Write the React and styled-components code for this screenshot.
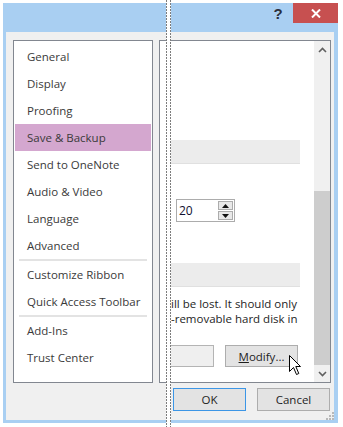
import React from 'react';
import styled, { createGlobalStyle } from 'styled-components';

const GlobalStyle = createGlobalStyle`
  html, body {
    margin: 0;
    padding: 0;
    background: #ffffff;
  }
  body {
    font-family: "Open Sans", "Noto Sans", Arial, sans-serif;
  }
`;

const Page = styled.div`
  position: relative;
  width: 343px;
  height: 427px;
  overflow: hidden;
  padding: 3px 5px 4px 3px;
  box-sizing: border-box;
`;

const Window = styled.div`
  width: 335px;
  height: 420px;
  background: #a9cff2;
  display: flex;
  flex-direction: column;
`;

const TitleBar = styled.div`
  height: 29px;
  display: flex;
  justify-content: flex-end;
  align-items: flex-start;
  flex-shrink: 0;
`;

const HelpButton = styled.div`
  width: 30px;
  height: 20px;
  display: flex;
  align-items: center;
  justify-content: center;
  font-family: "Liberation Sans", Arial, sans-serif;
  font-weight: bold;
  font-size: 15px;
  color: #2b2f3d;
`;

const CloseButton = styled.div`
  width: 45px;
  height: 20px;
  background: #c75050;
  display: flex;
  align-items: center;
  justify-content: center;
`;

const Body = styled.div`
  flex: 1;
  margin: 0 4px 3px 3px;
  background: #f0f0f0;
  padding: 8px 3px 0 7px;
  display: flex;
  flex-direction: column;
`;

const Panes = styled.div`
  display: flex;
  gap: 6px;
  height: 343px;
`;

const NavList = styled.div`
  width: 140px;
  box-sizing: border-box;
  border: 1px solid #828790;
  background: #fff;
  padding: 1.5px 1px 0 1px;
`;

const NavItem = styled.div`
  height: 27px;
  line-height: 27px;
  padding-left: 12px;
  font-size: 11.5px;
  color: #3a3a3a;
  background: ${p => (p.selected ? '#d4a7cf' : 'transparent')};
  white-space: nowrap;
`;

const NavSeparator = styled.div`
  height: 2px;
  margin: 0 4px;
  background: #e3e3e3;
`;

const ContentPanel = styled.div`
  width: 172px;
  box-sizing: border-box;
  border: 1px solid #828790;
  background: #fff;
  display: flex;
`;

const ContentArea = styled.div`
  flex: 1;
  padding: 99px 14px 0 7px;
  display: flex;
  flex-direction: column;
  font-size: 11.5px;
  color: #1e1e1e;
`;

const SectionHeader = styled.div`
  height: 23px;
  background: #ececec;
  border-bottom: 1px solid #e0e0e0;
  margin-top: ${p => p.top || 0}px;
`;

const SpinBox = styled.div`
  margin: 35px 0 0 9px;
  width: 59px;
  height: 23px;
  box-sizing: border-box;
  border: 1px solid #acacac;
  display: flex;
  align-items: stretch;
  padding: 1px;
`;

const SpinValue = styled.div`
  flex: 1;
  padding-left: 1px;
  line-height: 19px;
  font-size: 12px;
  color: #101030;
`;

const SpinButtons = styled.div`
  width: 15px;
  display: flex;
  flex-direction: column;
  gap: 1px;
`;

const SpinButton = styled.div`
  flex: 1;
  border: 1px solid #acacac;
  background: #e8e8e8;
  display: flex;
  align-items: center;
  justify-content: center;
`;

const Paragraph = styled.div`
  margin-top: 9px;
  padding-left: 4px;
  line-height: 15px;
  white-space: nowrap;
  overflow: hidden;
`;

const FieldRow = styled.div`
  margin-top: 19px;
  display: flex;
  gap: 11px;
  height: 22px;
`;

const TextField = styled.div`
  width: 47px;
  box-sizing: border-box;
  border: 1px solid #b4b4b4;
  background: #efefef;
`;

const PushButton = styled.div`
  position: relative;
  width: ${p => p.width || 73}px;
  box-sizing: border-box;
  border: 1px solid ${p => (p.primary ? '#3c96e6' : '#adadad')};
  background: #e3e3e3;
  display: flex;
  align-items: center;
  justify-content: center;
  font-size: 11.5px;
  color: #1e1e1e;
`;

const Underline = styled.span`
  text-decoration: underline;
`;

const Cursor = styled.svg`
  position: absolute;
  left: 63px;
  top: 9px;
`;

const Scrollbar = styled.div`
  width: 16px;
  background: #f0f0f0;
  display: flex;
  flex-direction: column;
  align-items: stretch;
`;

const ScrollArrow = styled.div`
  height: 17px;
  display: flex;
  align-items: center;
  justify-content: center;
`;

const ScrollTrack = styled.div`
  flex: 1;
  display: flex;
  flex-direction: column;
  padding-top: 133px;
`;

const ScrollThumb = styled.div`
  height: 174px;
  background: #cdcdcd;
`;

const ButtonRow = styled.div`
  margin-top: 5px;
  padding-left: 6px;
  display: flex;
  gap: 11px;
  height: 23px;
  padding-left: 160px;
`;

const Grip = styled.svg`
  position: absolute;
  right: 9px;
  bottom: 7px;
`;

const Tear = styled.div`
  position: absolute;
  top: 0;
  bottom: 0;
  left: 166px;
  width: 5px;
  background: #fff;
  &::before, &::after {
    content: '';
    position: absolute;
    top: 0;
    bottom: 0;
    width: 1px;
    background: repeating-linear-gradient(to bottom, #7d7d7d 0 2px, transparent 2px 3px);
  }
  &::before { left: 0; }
  &::after { right: 0; }
`;

const navGroups = [
  ['General', 'Display', 'Proofing', 'Save & Backup', 'Send to OneNote', 'Audio & Video', 'Language', 'Advanced'],
  ['Customize Ribbon', 'Quick Access Toolbar'],
  ['Add-Ins', 'Trust Center'],
];

const Chevron = ({ up }) => (
  <svg width="9" height="6" viewBox="0 0 9 6">
    <path
      d={up ? 'M1 5 L4.5 1.5 L8 5' : 'M1 1 L4.5 4.5 L8 1'}
      fill="none"
      stroke="#606060"
      strokeWidth="1.6"
    />
  </svg>
);

const Triangle = ({ up }) => (
  <svg width="7" height="4" viewBox="0 0 7 4">
    <path d={up ? 'M0 4 L3.5 0 L7 4 Z' : 'M0 0 L3.5 4 L7 0 Z'} fill="#111" />
  </svg>
);

export default function App() {
  return (
    <>
      <GlobalStyle />
      <Page>
        <Window>
          <TitleBar>
            <HelpButton>?</HelpButton>
            <CloseButton>
              <svg width="10" height="9" viewBox="0 0 10 9">
                <path d="M1 0.5 L9 8.5 M9 0.5 L1 8.5" stroke="#fff" strokeWidth="2" />
              </svg>
            </CloseButton>
          </TitleBar>
          <Body>
            <Panes>
              <NavList>
                {navGroups.map((group, gi) => (
                  <React.Fragment key={gi}>
                    {gi > 0 && <NavSeparator />}
                    {group.map(label => (
                      <NavItem key={label} selected={label === 'Save & Backup'}>
                        {label}
                      </NavItem>
                    ))}
                  </React.Fragment>
                ))}
              </NavList>
              <ContentPanel>
                <ContentArea>
                  <SectionHeader />
                  <SpinBox>
                    <SpinValue>20</SpinValue>
                    <SpinButtons>
                      <SpinButton><Triangle up /></SpinButton>
                      <SpinButton><Triangle /></SpinButton>
                    </SpinButtons>
                  </SpinBox>
                  <SectionHeader top={41} />
                  <Paragraph>
                    ill be lost. It should only
                    <br />
                    -removable hard disk in
                  </Paragraph>
                  <FieldRow>
                    <TextField />
                    <PushButton width={73}>
                      <span><Underline>M</Underline>odify...</span>
                      <Cursor width="13" height="21" viewBox="0 0 13 21">
                        <path
                          d="M0.5 0.5 L0.5 16.5 L4.5 12.5 L7.5 19.5 L9.8 18.5 L6.8 11.5 L11.5 11.5 Z"
                          fill="#fff"
                          stroke="#000"
                          strokeWidth="1"
                          strokeLinejoin="miter"
                        />
                      </Cursor>
                    </PushButton>
                  </FieldRow>
                </ContentArea>
                <Scrollbar>
                  <ScrollArrow><Chevron up /></ScrollArrow>
                  <ScrollTrack>
                    <ScrollThumb />
                  </ScrollTrack>
                  <ScrollArrow><Chevron /></ScrollArrow>
                </Scrollbar>
              </ContentPanel>
            </Panes>
            <ButtonRow>
              <PushButton primary>OK</PushButton>
              <PushButton>Cancel</PushButton>
            </ButtonRow>
          </Body>
        </Window>
        <Grip width="9" height="9" viewBox="0 0 9 9">
          {[[7, 1], [7, 4], [4, 4], [7, 7], [4, 7], [1, 7]].map(([x, y]) => (
            <rect key={`${x}-${y}`} x={x} y={y} width="2" height="2" fill="#b8b8b8" />
          ))}
        </Grip>
        <Tear />
      </Page>
    </>
  );
}
